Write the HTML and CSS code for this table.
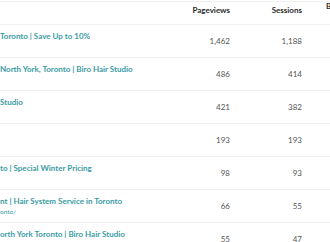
FILE: index.html
```html
<!DOCTYPE html>
<html>
<head>
<meta charset="utf-8">
<link rel="stylesheet" href="styles.css">
</head>
<body>
<div class="viewport">
  <table class="report">
    <thead>
      <tr>
        <th class="col-title"></th>
        <th class="col-num">Pageviews</th>
        <th class="col-num">Sessions</th>
        <th class="col-extra"><span class="cut">B</span></th>
      </tr>
    </thead>
    <tbody>
      <tr>
        <td class="col-title"><div class="title">Toronto | Save Up to 10%</div><div class="url"></div></td>
        <td class="col-num">1,462</td>
        <td class="col-num">1,188</td>
        <td class="col-extra"></td>
      </tr>
      <tr>
        <td class="col-title"><div class="title">North York, Toronto | Biro Hair Studio</div><div class="url"></div></td>
        <td class="col-num">486</td>
        <td class="col-num">414</td>
        <td class="col-extra"></td>
      </tr>
      <tr>
        <td class="col-title"><div class="title">Studio</div><div class="url"></div></td>
        <td class="col-num">421</td>
        <td class="col-num">382</td>
        <td class="col-extra"></td>
      </tr>
      <tr>
        <td class="col-title"><div class="title"></div><div class="url"></div></td>
        <td class="col-num">193</td>
        <td class="col-num">193</td>
        <td class="col-extra"></td>
      </tr>
      <tr>
        <td class="col-title"><div class="title">to | Special Winter Pricing</div><div class="url"></div></td>
        <td class="col-num">98</td>
        <td class="col-num">93</td>
        <td class="col-extra"></td>
      </tr>
      <tr>
        <td class="col-title"><div class="title">nt | Hair System Service in Toronto</div><div class="url">onto/</div></td>
        <td class="col-num">66</td>
        <td class="col-num">55</td>
        <td class="col-extra"></td>
      </tr>
      <tr>
        <td class="col-title"><div class="title">orth York Toronto | Biro Hair Studio</div><div class="url"></div></td>
        <td class="col-num">55</td>
        <td class="col-num">47</td>
        <td class="col-extra"></td>
      </tr>
    </tbody>
  </table>
</div>
</body>
</html>
```
FILE: styles.css
```css
html, body {
  margin: 0;
  padding: 0;
  background: #fff;
}
.viewport {
  width: 330px;
  height: 242px;
  overflow: hidden;
  padding-top: 1px;
  box-sizing: border-box;
}
.report {
  border-collapse: collapse;
  table-layout: fixed;
  width: 350px;
  font-family: "Lato", "Liberation Sans", sans-serif;
}
.report th,
.report td {
  padding: 0;
  border-top: 1px solid #efefef;
}
.report thead th {
  height: 23px;
  box-sizing: border-box;
  font-size: 8px;
  font-weight: 700;
  color: #2b2b2b;
  vertical-align: top;
  padding-top: 3px;
  line-height: 10px;
}
.report tbody td {
  height: 33px;
  box-sizing: border-box;
  vertical-align: middle;
}
.col-title {
  width: 168px;
  text-align: left;
  white-space: nowrap;
  overflow: hidden;
}
.col-num {
  width: 72px;
  text-align: right;
  padding-right: 10px !important;
}
.report tbody .col-num {
  font-size: 8px;
  color: #555;
}
.col-extra {
  text-align: left;
  padding-left: 14px !important;
}
.report thead .col-extra {
  padding-top: 0;
  line-height: 8px;
}
.title {
  font-size: 8px;
  font-weight: 700;
  color: #3a9ca4;
  line-height: 11px;
  height: 11px;
}
.url {
  font-size: 6.5px;
  color: #3a9ca4;
  line-height: 9px;
  height: 9px;
}
```
